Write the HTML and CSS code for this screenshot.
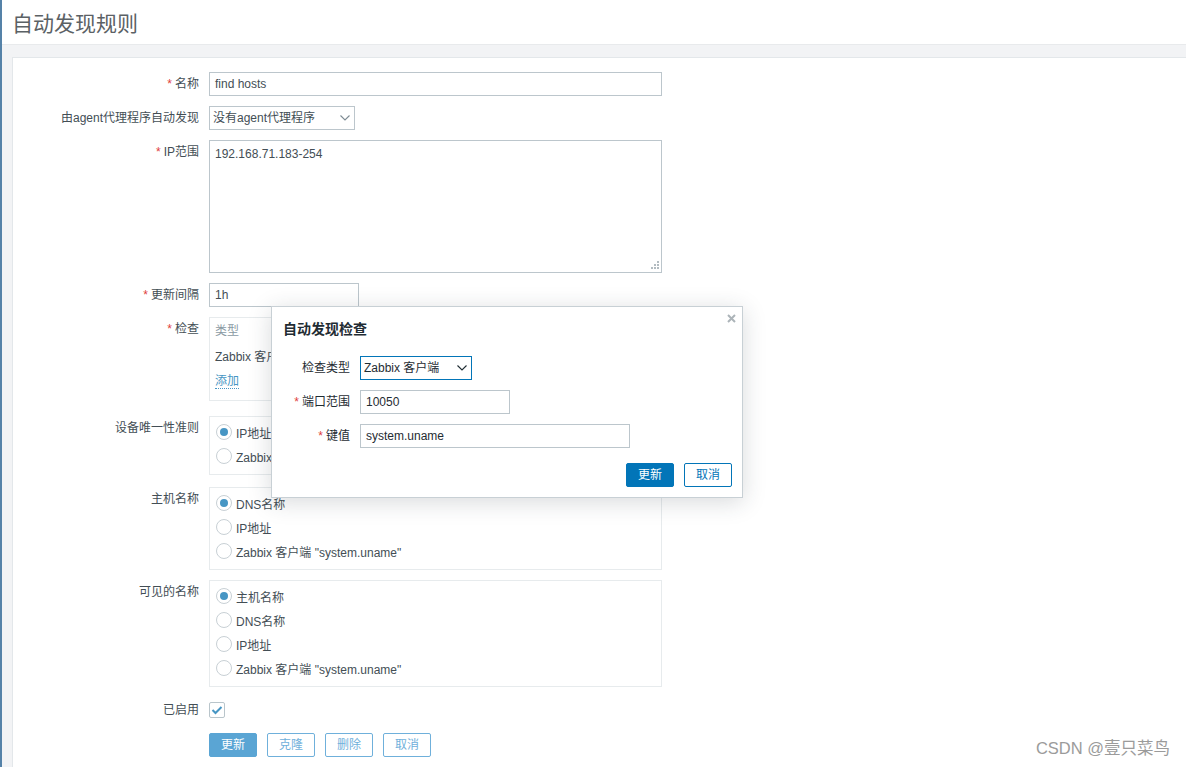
FILE: index.html
```html
<!DOCTYPE html>
<html lang="zh-CN">
<head>
<meta charset="utf-8">
<title>自动发现规则</title>
<link rel="stylesheet" href="styles.css">
</head>
<body>
<header class="page-header"><h1>自动发现规则</h1></header>
<main class="wrap">
  <div class="card">
    <div class="form">
      <div class="lbl req">名称</div>
      <div class="fld"><div class="inp w453">find hosts</div></div>

      <div class="lbl">由agent代理程序自动发现</div>
      <div class="fld"><div class="inp sel w146"><span>没有agent代理程序</span><svg class="chev" width="10" height="6" viewBox="0 0 10 6"><polyline points="0.5,0.5 5,5 9.5,0.5" fill="none" stroke="#7d8b93" stroke-width="1.1"/></svg></div></div>

      <div class="lbl req">IP范围</div>
      <div class="fld"><div class="inp ta w453">192.168.71.183-254<svg class="grip" width="9" height="9" viewBox="0 0 9 9"><rect x="7" y="0" width="2" height="2"/><rect x="4" y="3" width="2" height="2"/><rect x="7" y="3" width="2" height="2"/><rect x="1" y="6" width="2" height="2"/><rect x="4" y="6" width="2" height="2"/><rect x="7" y="6" width="2" height="2"/></svg></div></div>

      <div class="lbl req">更新间隔</div>
      <div class="fld"><div class="inp w150">1h</div></div>

      <div class="lbl req">检查</div>
      <div class="fld">
        <div class="box checks">
          <div class="th-row"><span class="c1">类型</span></div>
          <div class="td-row"><span class="c1">Zabbix 客户端 "system.uname"</span></div>
          <div class="add-row"><span class="lnk dotted">添加</span></div>
        </div>
      </div>

      <div class="lbl sp5">设备唯一性准则</div>
      <div class="fld sp5">
        <div class="box radios">
          <div class="ritem"><span class="radio on"></span>IP地址</div>
          <div class="ritem"><span class="radio"></span>Zabbix 客户端 "system.uname"</div>
        </div>
      </div>

      <div class="lbl sp2">主机名称</div>
      <div class="fld sp2">
        <div class="box radios">
          <div class="ritem"><span class="radio on"></span>DNS名称</div>
          <div class="ritem"><span class="radio"></span>IP地址</div>
          <div class="ritem"><span class="radio"></span>Zabbix 客户端 "system.uname"</div>
        </div>
      </div>

      <div class="lbl">可见的名称</div>
      <div class="fld">
        <div class="box radios">
          <div class="ritem"><span class="radio on"></span>主机名称</div>
          <div class="ritem"><span class="radio"></span>DNS名称</div>
          <div class="ritem"><span class="radio"></span>IP地址</div>
          <div class="ritem"><span class="radio"></span>Zabbix 客户端 "system.uname"</div>
        </div>
      </div>

      <div class="lbl sp1">已启用</div>
      <div class="fld sp1 cbrow"><span class="cbox"><svg width="12" height="10" viewBox="0 0 12 10"><polyline points="1.5,5 4.5,8 10.5,2" fill="none" stroke="#4796c4" stroke-width="2"/></svg></span></div>

      <div class="lbl sp1"></div>
      <div class="fld sp1 btns">
        <span class="btn prim-dim">更新</span>
        <span class="btn sec-dim">克隆</span>
        <span class="btn sec-dim">删除</span>
        <span class="btn sec-dim">取消</span>
      </div>
    </div>
  </div>
</main>

<div class="dialog">
  <div class="dlg-title">自动发现检查</div>
  <svg class="dlg-close" width="9" height="9" viewBox="0 0 9 9"><path d="M1 1L8 8M8 1L1 8" stroke="#acb4b9" stroke-width="2"/></svg>
  <div class="dlg-form">
    <div class="dlbl">检查类型</div>
    <div class="dfld"><div class="inp sel focus w112"><span>Zabbix 客户端</span><svg class="chev" width="10" height="6" viewBox="0 0 10 6"><polyline points="0.5,0.5 5,5 9.5,0.5" fill="none" stroke="#1f2c33" stroke-width="1.1"/></svg></div></div>
    <div class="dlbl req">端口范围</div>
    <div class="dfld"><div class="inp dk w150">10050</div></div>
    <div class="dlbl req">键值</div>
    <div class="dfld"><div class="inp dk w270">system.uname</div></div>
  </div>
  <div class="dlg-btns">
    <span class="btn prim">更新</span>
    <span class="btn sec">取消</span>
  </div>
</div>

<div class="watermark">CSDN @壹只菜鸟</div>
</body>
</html>
```
FILE: styles.css
```css
* { box-sizing: border-box; }

html, body { height: 100%; }

body {
  margin: 0;
  font-family: "Liberation Sans", "Noto Sans CJK SC", sans-serif;
  font-size: 12px;
  color: #1f2c33;
  background: #f2f3f5;
  border-left: 2px solid #5582a8;
  overflow: hidden;
}

.page-header {
  height: 45px;
  background: #fff;
  padding-left: 10px;
  display: flex;
  align-items: center;
}

.page-header h1 {
  margin: 0;
  font-size: 21px;
  font-weight: normal;
  color: #5b6165;
  position: relative;
  top: -1px;
}

.wrap {
  padding: 12px 0 0 10px;
  border-top: 1px solid #e8eaec;
  margin-top: -1px;
}

.card {
  background: #fff;
  border-left: 1px solid #e3e7ea;
  border-top: 1px solid #e3e7ea;
  padding: 14px 0 40px 0;
  min-height: 720px;
}

.form {
  display: grid;
  grid-template-columns: 196px 1fr;
  row-gap: 10px;
  align-items: start;
}

.lbl {
  text-align: right;
  padding-right: 10px;
  line-height: 24px;
  color: #434e55;
  white-space: nowrap;
}

.req::before {
  content: "*";
  color: #e0403c;
  margin-right: 3px;
}

.sp5 { margin-top: 5px; }
.sp2 { margin-top: 2px; }
.sp1 { margin-top: 1px; }

.inp {
  height: 24px;
  border: 1px solid #bcc6cc;
  background: #fff;
  padding: 0 5px;
  line-height: 22px;
  color: #434e55;
  white-space: nowrap;
}

.w453 { width: 453px; }
.w146 { width: 146px; }
.w150 { width: 150px; }
.w112 { width: 112px; }
.w270 { width: 270px; }

.sel {
  display: flex;
  align-items: center;
  justify-content: space-between;
  padding: 0 4px 0 3px;
}

.chev { flex: none; }

.ta {
  position: relative;
  height: 133px;
  line-height: 16px;
  padding-top: 5px;
}

.grip {
  position: absolute;
  right: 2px;
  bottom: 2px;
  fill: #b3bcc1;
}

.box {
  width: 453px;
  border: 1px solid #e7ebed;
}

.checks {
  height: 84px;
  padding: 3px 5px 0;
  line-height: 20px;
}

.th-row, .td-row {
  display: flex;
}

.th-row { color: #8a9aa3; height: 20px; }
.td-row { height: 24px; line-height: 32px; color: #434e55; white-space: nowrap; }
.add-row { margin-top: 5px; line-height: 22px; }

.lnk { color: #4796c4; }
.dotted { border-bottom: 1px dotted #4796c4; }

.radios {
  padding: 3px 5px 6px;
}

.ritem {
  height: 24px;
  display: flex;
  align-items: center;
  color: #434e55;
  white-space: nowrap;
}

.radio {
  width: 16px;
  height: 16px;
  border: 1px solid #c8d0d5;
  border-radius: 50%;
  margin: 0 4px 0 1px;
  display: inline-flex;
  align-items: center;
  justify-content: center;
  flex: none;
}

.radio.on::after {
  content: "";
  width: 8px;
  height: 8px;
  border-radius: 50%;
  background: #4796c4;
}

.cbrow {
  height: 24px;
  display: flex;
  align-items: center;
}

.cbox {
  width: 16px;
  height: 16px;
  border: 1px solid #b9c5cb;
  border-radius: 2px;
  display: inline-flex;
  align-items: center;
  justify-content: center;
}

.btns {
  display: flex;
  gap: 10px;
}

.btn {
  display: inline-block;
  height: 24px;
  line-height: 22px;
  padding: 0 11px;
  border: 1px solid;
  border-radius: 2px;
  font-size: 12px;
  text-align: center;
}

.prim-dim {
  background: #5aa5d4;
  border-color: #5aa5d4;
  color: #fff;
}

.sec-dim {
  background: #fff;
  border-color: #6fb0db;
  color: #6fb0db;
}

.prim {
  background: #0275b8;
  border-color: #0275b8;
  color: #fff;
}

.sec {
  background: #fff;
  border-color: #0275b8;
  color: #0275b8;
}

.dialog {
  position: absolute;
  left: 271px;
  top: 306px;
  width: 472px;
  height: 192px;
  background: #fff;
  border: 1px solid #c8d0d5;
  box-shadow: 0 4px 22px rgba(40, 50, 60, 0.18);
}

.dlg-title {
  font-weight: bold;
  font-size: 14px;
  line-height: 22px;
  padding: 11px 11px 0;
  color: #1f2c33;
}

.dlg-close {
  position: absolute;
  top: 7px;
  right: 6px;
}

.dlg-form {
  display: grid;
  grid-template-columns: 88px 1fr;
  row-gap: 10px;
  margin-top: 16px;
}

.dlbl {
  text-align: right;
  padding-right: 10px;
  line-height: 24px;
  color: #1f2c33;
}

.inp.dk { color: #1f2c33; }

.focus {
  border-color: #0275b8;
  color: #1f2c33;
}

.dlg-btns {
  display: flex;
  justify-content: flex-end;
  gap: 10px;
  margin-top: 15px;
  padding-right: 10px;
}

.watermark {
  position: absolute;
  right: 16px;
  top: 738px;
  font-size: 16.5px;
  line-height: 20px;
  color: #9b9b9b;
  white-space: nowrap;
}
```
